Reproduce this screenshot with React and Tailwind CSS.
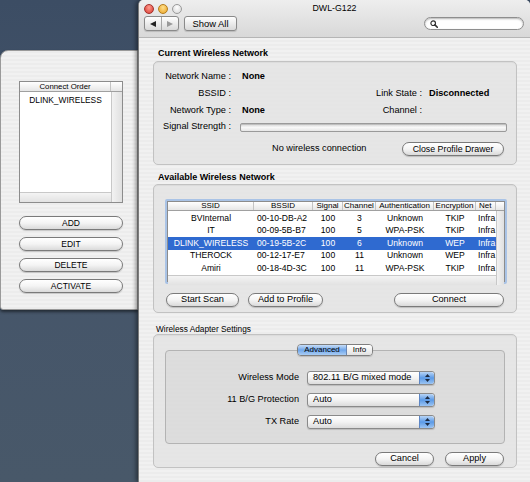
import React from "react";

const stripes =
  "bg-[repeating-linear-gradient(0deg,#ececec_0px,#ececec_2px,#f1f1f1_2px,#f1f1f1_4px)]";

function Btn({ children, className = "" }) {
  return (
    <div
      className={
        "flex items-center justify-center rounded-full border border-[#7a7a7a] bg-linear-to-b from-white via-[#f4f4f4] to-[#dadada] text-black leading-none shadow-[0_1px_1px_rgba(0,0,0,0.18)] " +
        className
      }
    >
      {children}
    </div>
  );
}

function Light({ className }) {
  return <div className={"h-[10px] w-[10px] rounded-full border " + className} />;
}

function Stepper() {
  return (
    <div className="flex h-full w-[15px] flex-col items-center justify-center gap-[2px] rounded-r-[3px] border-l border-[#5d86c4] bg-linear-to-b from-[#b8d4f5] via-[#5b9ae6] to-[#9cc4f2]">
      <svg width="5" height="3" viewBox="0 0 5 3">
        <path d="M0 3 L2.5 0 L5 3 Z" fill="#1d2a40" />
      </svg>
      <svg width="5" height="3" viewBox="0 0 5 3">
        <path d="M0 0 L2.5 3 L5 0 Z" fill="#1d2a40" />
      </svg>
    </div>
  );
}

function Popup({ value }) {
  return (
    <div className="flex h-[14px] w-[128px] items-center rounded-[3px] border border-[#8a8a8a] bg-linear-to-b from-white via-[#f3f3f3] to-[#dcdcdc] shadow-[0_1px_1px_rgba(0,0,0,0.15)]">
      <span className="flex-1 pl-[5px] text-[9.2px] leading-none">{value}</span>
      <Stepper />
    </div>
  );
}

const rows = [
  ["BVInternal", "00-10-DB-A2", "100", "3", "Unknown", "TKIP", "Infra"],
  ["IT", "00-09-5B-B7", "100", "5", "WPA-PSK", "TKIP", "Infra"],
  ["DLINK_WIRELESS", "00-19-5B-2C", "100", "6", "Unknown", "WEP", "Infra"],
  ["THEROCK", "00-12-17-E7", "100", "11", "Unknown", "WEP", "Infra"],
  ["Amiri", "00-18-4D-3C", "100", "11", "WPA-PSK", "TKIP", "Infra"],
];

function NetTable() {
  const head = "flex items-center justify-center border-r border-[#c4c4c4] overflow-hidden whitespace-nowrap";
  return (
    <div className="ml-[11px] mt-[14px] h-[85px] w-[342px] rounded-[2px] border-[2px] border-[#a9c3e6] bg-white">
      <div className="flex h-full w-full flex-col border border-[#8c8c8c]">
        <div className="flex h-[10px] border-b border-[#a0a0a0] bg-linear-to-b from-white to-[#e6e6e6] text-[8px] leading-none">
          <div className={head + " w-[86px]"}>SSID</div>
          <div className={head + " w-[59px]"}>BSSID</div>
          <div className={head + " w-[30px]"}>Signal</div>
          <div className={head + " w-[33px]"}>Channel</div>
          <div className={head + " w-[58px]"}>Authentication</div>
          <div className={head + " w-[42px]"}>Encryption</div>
          <div className="flex w-[20px] items-center justify-start overflow-hidden border-r border-[#c4c4c4] pl-[3px]">Net</div>
          <div className="flex-1" />
        </div>
        <div className="flex flex-1">
          <div className="flex flex-1 flex-col">
            <div className="flex-1 pt-[1px]">
              {rows.map((r, i) => {
                const sel = i === 2;
                return (
                  <div
                    key={i}
                    className={
                      "flex h-[12.5px] items-center text-[8.6px] leading-none whitespace-nowrap " +
                      (sel ? "bg-[#2f6ad0] text-white" : "text-black")
                    }
                  >
                    <div className="w-[86px] overflow-hidden text-center">{r[0]}</div>
                    <div className="w-[59px] overflow-hidden pl-[3px]">{r[1]}</div>
                    <div className="w-[30px] overflow-hidden text-center">{r[2]}</div>
                    <div className="w-[33px] overflow-hidden text-center">{r[3]}</div>
                    <div className="w-[58px] overflow-hidden text-center">{r[4]}</div>
                    <div className="w-[42px] overflow-hidden text-center">{r[5]}</div>
                    <div className="w-[20px] overflow-hidden pl-[2px]">{r[6]}</div>
                  </div>
                );
              })}
            </div>
            <div className="h-[10px] border-t border-[#c8c8c8] bg-linear-to-b from-[#f4f4f4] to-[#e2e2e2]" />
          </div>
          <div className="w-[10px] border-l border-[#c8c8c8] bg-linear-to-r from-[#f2f2f2] to-[#e0e0e0]" />
        </div>
      </div>
    </div>
  );
}

function Group({ className = "", children }) {
  return (
    <div
      className={
        "rounded-[5px] border border-[#c2c2c2] bg-[#e3e3e3]/80 shadow-[inset_0_1px_1px_rgba(0,0,0,0.05)] " +
        className
      }
    >
      {children}
    </div>
  );
}

function Drawer() {
  return (
    <div
      className={
        "flex h-[260px] flex-col rounded-tl-[8px] rounded-bl-[3px] border border-[#9a9a9a] pl-[18px] pt-[30px] shadow-[0_2px_3px_rgba(0,0,0,0.5)] " +
        stripes
      }
    >
      <div className="flex h-[122px] w-[104px] flex-col border border-[#8c8c8c] bg-white">
        <div className="flex h-[10px] border-b border-[#a0a0a0] bg-linear-to-b from-white to-[#e6e6e6] text-[7.8px] leading-none">
          <div className="flex flex-1 items-center justify-center border-r border-[#c4c4c4]">Connect Order</div>
          <div className="w-[11px]" />
        </div>
        <div className="flex flex-1">
          <div className="flex flex-1 flex-col">
            <div className="flex-1 pt-[3px] text-center text-[8.4px] leading-[10px]">DLINK_WIRELESS</div>
            <div className="h-[10px] border-t border-[#c8c8c8] bg-linear-to-b from-[#f4f4f4] to-[#e2e2e2]" />
          </div>
          <div className="w-[11px] border-l border-[#c8c8c8] bg-linear-to-r from-[#f2f2f2] to-[#e0e0e0]" />
        </div>
      </div>
      <div className="mt-[13px] flex w-[104px] flex-col gap-[7px] text-[8.5px]">
        <Btn className="h-[14px]">ADD</Btn>
        <Btn className="h-[14px]">EDIT</Btn>
        <Btn className="h-[14px]">DELETE</Btn>
        <Btn className="h-[14px]">ACTIVATE</Btn>
      </div>
    </div>
  );
}

export default function App() {
  return (
    <div className="flex h-[482px] w-[530px] overflow-hidden bg-linear-to-b from-[#3c4d64] via-[#45556a] to-[#485869] font-['Liberation_Sans',Arial,sans-serif] text-black">
      {/* left: desktop + drawer */}
      <div className="flex w-[138px] flex-col">
        <div className="h-[50px]" />
        <Drawer />
      </div>

      {/* main window */}
      <div
        className={
          "flex w-[392px] flex-col rounded-t-[5px] border-l border-[#7c7c7c] shadow-[-2px_0_4px_rgba(0,0,0,0.45)] " +
          stripes
        }
      >
        {/* title + toolbar */}
        <div className="flex h-[38px] flex-col rounded-t-[5px] border-b border-[#b5b5b5] bg-linear-to-b from-[#eeeeee] to-[#d8d8d8]">
          <div className="grid h-[15px] grid-cols-[46px_1fr_46px] items-center pt-[2px]">
            <div className="flex items-center gap-[4px] pl-[5px]">
              <Light className="border-[#a3312c] bg-radial-[at_50%_30%] from-[#ff9c90] to-[#d8372d]" />
              <Light className="border-[#b47d1d] bg-radial-[at_50%_30%] from-[#ffe08a] to-[#e9a124]" />
              <Light className="border-[#9a9a9a] bg-radial-[at_50%_30%] from-white to-[#d4d4d4]" />
            </div>
            <div className="text-center text-[8.8px] leading-none">DWL-G122</div>
            <div />
          </div>
          <div className="mt-[1px] flex items-center px-[5px]">
            <div className="flex h-[15px] w-[35px] rounded-[3px] border border-[#8a8a8a] bg-linear-to-b from-white to-[#d9d9d9] shadow-[0_1px_1px_rgba(0,0,0,0.15)]">
              <div className="flex flex-1 items-center justify-center border-r border-[#a6a6a6]">
                <svg width="6" height="6" viewBox="0 0 6 6">
                  <path d="M0 3 L6 0 L6 6 Z" fill="#222" />
                </svg>
              </div>
              <div className="flex flex-1 items-center justify-center">
                <svg width="6" height="6" viewBox="0 0 6 6">
                  <path d="M6 3 L0 0 L0 6 Z" fill="#9a9a9a" />
                </svg>
              </div>
            </div>
            <div className="ml-[5px] flex h-[15px] w-[53px] items-center justify-center rounded-[3px] border border-[#8a8a8a] bg-linear-to-b from-white to-[#d9d9d9] text-[9.4px] leading-none shadow-[0_1px_1px_rgba(0,0,0,0.15)]">
              Show All
            </div>
            <div className="flex-1" />
            <div className="mr-[1px] flex h-[13px] w-[100px] items-center rounded-full border border-[#8e8e8e] bg-white pl-[5px] shadow-[inset_0_1px_2px_rgba(0,0,0,0.3)]">
              <svg width="8" height="8" viewBox="0 0 8 8">
                <circle cx="3.2" cy="3.2" r="2.3" fill="none" stroke="#333" strokeWidth="1.2" />
                <path d="M4.9 4.9 L7.3 7.3" stroke="#333" strokeWidth="1.6" strokeLinecap="round" />
              </svg>
            </div>
          </div>
        </div>

        {/* content */}
        <div className="flex flex-col pl-[14px] pr-[13px] pt-[10px]">
          <div className="mb-[2px] h-[11px] pl-[5px] text-[9px] font-bold leading-[11px]">Current Wireless Network</div>
          <Group className="h-[104px] pt-[6px] text-[9.2px] leading-none">
            <div className="flex h-[17px] items-center">
              <span className="w-[77px] text-right">Network Name :</span>
              <span className="ml-[11px] font-bold">None</span>
            </div>
            <div className="flex h-[17px] items-center">
              <span className="w-[77px] text-right">BSSID :</span>
              <span className="ml-[11px] w-[100px]" />
              <span className="w-[80px] text-right">Link State :</span>
              <span className="ml-[7px] font-bold">Disconnected</span>
            </div>
            <div className="flex h-[17px] items-center">
              <span className="w-[77px] text-right">Network Type :</span>
              <span className="ml-[11px] w-[100px] font-bold">None</span>
              <span className="w-[80px] text-right">Channel :</span>
            </div>
            <div className="flex h-[16px] items-center">
              <span className="w-[77px] text-right">Signal Strength :</span>
              <div className="ml-[9px] h-[9px] w-[267px] rounded-[2px] border border-[#9a9a9a] bg-linear-to-b from-[#d8d8d8] via-[#f8f8f8] to-[#e6e6e6] shadow-[inset_0_1px_1px_rgba(0,0,0,0.15)]" />
            </div>
            <div className="mt-[7px] flex h-[14px] items-center">
              <span className="ml-[118px]">No wireless connection</span>
              <Btn className="ml-auto mr-[12px] h-[14px] w-[102px] text-[8.8px]">Close Profile Drawer</Btn>
            </div>
          </Group>

          <div className="mb-[1px] mt-[7px] h-[11px] pl-[5px] text-[9px] font-bold leading-[11px]">Available Wireless Network</div>
          <Group className="h-[129px]">
            <NetTable />
            <div className="mt-[9px] flex items-center text-[9.2px]">
              <Btn className="ml-[12px] h-[14px] w-[73px]">Start Scan</Btn>
              <Btn className="ml-[9px] h-[14px] w-[75px]">Add to Profile</Btn>
              <Btn className="ml-auto mr-[12px] h-[14px] w-[110px]">Connect</Btn>
            </div>
          </Group>

          <div className="mt-[11px] h-[10px] pl-[3px] text-[8.3px] leading-[10px]">Wireless Adapter Settings</div>
          <Group className="h-[134px] pt-[15px]">
            <div className="mx-[11px] flex h-[94px] flex-col items-center rounded-[4px] border border-[#b3b3b3] bg-[#d9d9d9]/70">
              <div className="-mt-[7px] flex h-[12px] w-[76px] overflow-hidden rounded-[4px] border border-[#7f7f7f] text-[8px] leading-none shadow-[0_1px_1px_rgba(0,0,0,0.15)]">
                <div className="flex w-[49px] items-center justify-center border-r border-[#6a86b3] bg-linear-to-b from-[#c7ddf7] via-[#6fa6ea] to-[#a9cdf5]">
                  Advanced
                </div>
                <div className="flex flex-1 items-center justify-center bg-linear-to-b from-white to-[#e2e2e2]">Info</div>
              </div>
              <div className="mt-[15px] flex w-full flex-col gap-[8px] text-[9.2px]">
                {[
                  ["Wireless Mode", "802.11 B/G mixed mode"],
                  ["11 B/G Protection", "Auto"],
                  ["TX Rate", "Auto"],
                ].map(([l, v]) => (
                  <div key={l} className="flex h-[14px] items-center">
                    <span className="w-[133px] text-right leading-none">{l}</span>
                    <div className="ml-[8px]">
                      <Popup value={v} />
                    </div>
                  </div>
                ))}
              </div>
            </div>
            <div className="mt-[8px] flex justify-end gap-[11px] pr-[12px] text-[9.2px]">
              <Btn className="h-[14px] w-[59px]">Cancel</Btn>
              <Btn className="h-[14px] w-[59px]">Apply</Btn>
            </div>
          </Group>
        </div>
      </div>
    </div>
  );
}
